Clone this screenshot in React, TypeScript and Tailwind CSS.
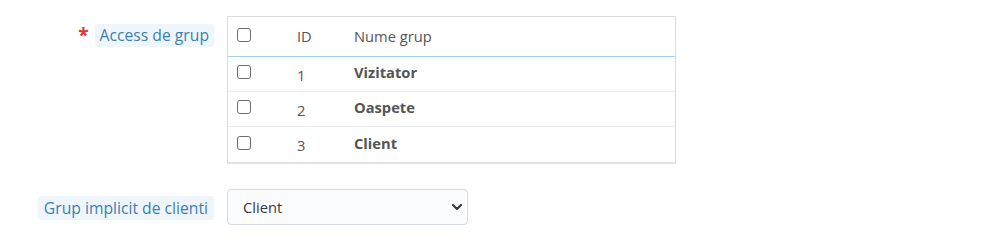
import React from "react";

const Box = () => (
  <span className="inline-block w-[14px] h-[14px] rounded-[3px] border border-[#6c6c6c] bg-white" />
);

const rows = [
  { id: 1, name: "Vizitator" },
  { id: 2, name: "Oaspete" },
  { id: 3, name: "Client" },
];

export default function App() {
  return (
    <div
      className="w-[1000px] h-[240px] bg-white text-[14.7px] text-[#363a41]"
      style={{ fontFamily: '"Open Sans", "Noto Sans", sans-serif' }}
    >
      <div className="flex pt-[16px]">
        <div className="w-[214px] flex justify-end items-start pt-[8px]">
          <span className="text-[#e0392f] text-[19px] leading-[22px] mr-[6px] font-bold">*</span>
          <span className="bg-[#eef6fc] text-[#3d7fae] text-[15.7px] rounded-[3px] px-[5px] leading-[23px]">Access de grup</span>
        </div>
        <div className="ml-[13px] w-[449px] border border-[#dcdcdc] border-b-2 border-b-[#e2e2e2]">
          <div className="flex items-center h-[40px] border-b border-[#a9cfe9] text-[#555]">
            <div className="w-[69px] pl-[9px] flex items-center -mt-[3px]"><Box /></div>
            <div className="w-[57px]">ID</div>
            <div>Nume grup</div>
          </div>
          {rows.map((r, i) => (
            <div
              key={r.id}
              className={`flex items-center h-[35px] ${i < 2 ? "border-b border-[#ececec]" : ""}`}
            >
              <div className="w-[69px] pl-[9px] flex items-center -mt-[4px]"><Box /></div>
              <div className="w-[57px] text-[#555] pt-[2px]">{r.id}</div>
              <div className="font-bold text-[#555] -mt-[3px]">{r.name}</div>
            </div>
          ))}
        </div>
      </div>
      <div className="flex items-center mt-[25px]">
        <div className="w-[214px] flex justify-end pt-[2px]">
          <span className="bg-[#eef6fc] text-[#3d7fae] text-[15.7px] rounded-[3px] px-[6px] leading-[24px]">Grup implicit de clienti</span>
        </div>
        <div className="ml-[13px] w-[241px] h-[36px] border border-[#d3dae0] rounded-[4px] bg-[#fbfcfd] flex items-center justify-between pl-[15px] pr-[4px] text-[#363a41]">
          <span>Client</span>
          <svg width="12" height="12" viewBox="0 0 12 12">
            <path d="M2 4 L6 8 L10 4" fill="none" stroke="#363a41" strokeWidth="2.2" strokeLinecap="round" strokeLinejoin="round" />
          </svg>
        </div>
      </div>
    </div>
  );
}
